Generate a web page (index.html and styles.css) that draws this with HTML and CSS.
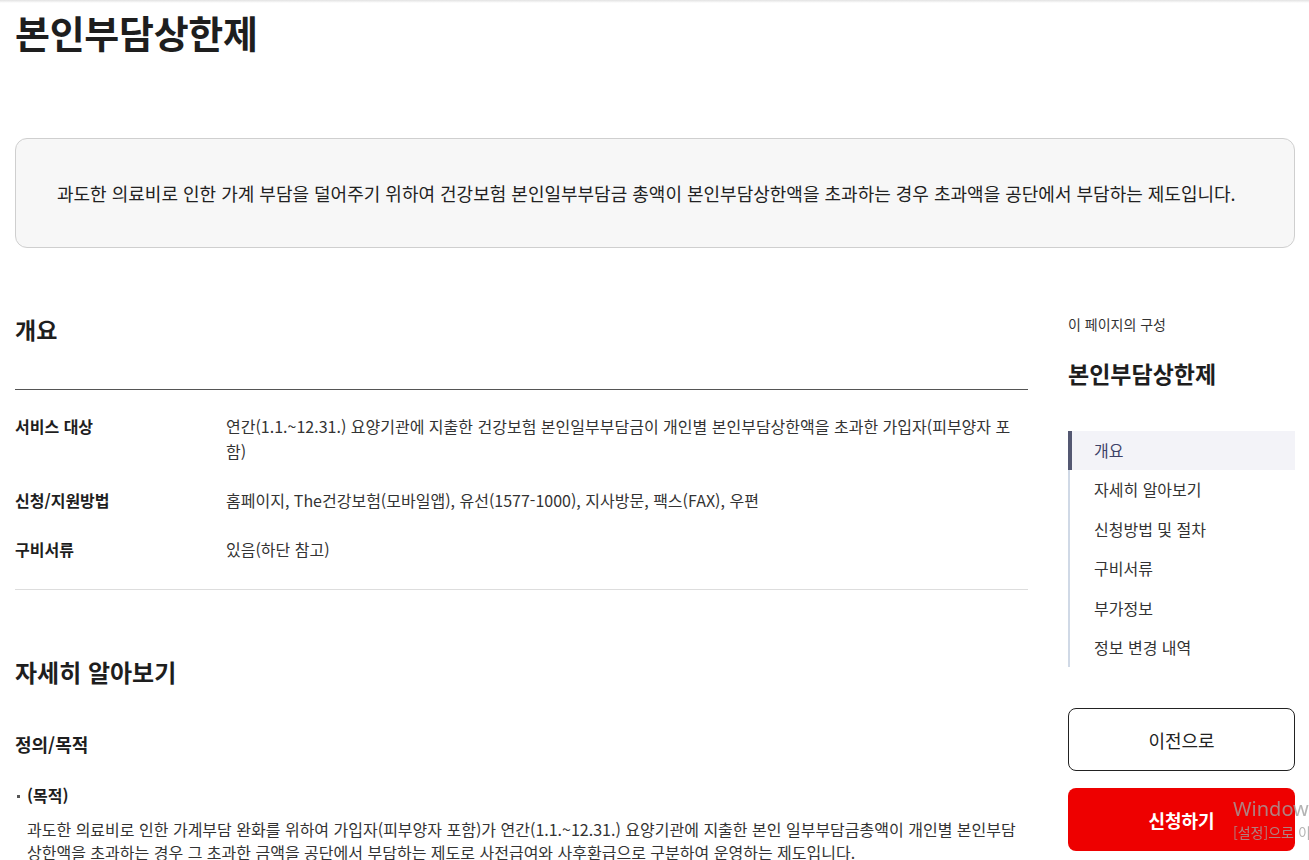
FILE: index.html
```html
<!DOCTYPE html>
<html lang="ko">
<head>
  <meta charset="UTF-8">
  <meta name="viewport" content="width=device-width, initial-scale=1.0">
  <title>본인부담상한제</title>
  <link rel="stylesheet" href="styles.css">
</head>
<body>
  <div class="topbar"></div>
  <div class="page">
    <h1 class="page-title">본인부담상한제</h1>

    <div class="summary">
      <p>과도한 의료비로 인한 가계 부담을 덜어주기 위하여 건강보험 본인일부부담금 총액이 본인부담상한액을 초과하는 경우 초과액을 공단에서 부담하는 제도입니다.</p>
    </div>

    <div class="content">
      <main class="main">
        <section class="section">
          <div class="section-head">
            <h2>개요</h2>
          </div>
          <dl class="info-list">
            <div class="info-row">
              <dt>서비스 대상</dt>
              <dd>연간(1.1.~12.31.) 요양기관에 지출한 건강보험 본인일부부담금이 개인별 본인부담상한액을 초과한 가입자(피부양자 포함)</dd>
            </div>
            <div class="info-row">
              <dt>신청/지원방법</dt>
              <dd>홈페이지, The건강보험(모바일앱), 유선(1577-1000), 지사방문, 팩스(FAX), 우편</dd>
            </div>
            <div class="info-row">
              <dt>구비서류</dt>
              <dd>있음(하단 참고)</dd>
            </div>
          </dl>
        </section>

        <section class="section detail">
          <h2>자세히 알아보기</h2>
          <h3>정의/목적</h3>
          <ul class="bullets">
            <li>
              <strong>(목적)</strong>
              <p>과도한 의료비로 인한 가계부담 완화를 위하여 가입자(피부양자 포함)가 연간(1.1.~12.31.) 요양기관에 지출한 본인 일부부담금총액이 개인별 본인부담상한액을 초과하는 경우 그 초과한 금액을 공단에서 부담하는 제도로 사전급여와 사후환급으로 구분하여 운영하는 제도입니다.</p>
            </li>
          </ul>
        </section>
      </main>

      <aside class="side">
        <div class="side-label">이 페이지의 구성</div>
        <div class="side-title">본인부담상한제</div>
        <ul class="toc">
          <li class="active">개요</li>
          <li>자세히 알아보기</li>
          <li>신청방법 및 절차</li>
          <li>구비서류</li>
          <li>부가정보</li>
          <li>정보 변경 내역</li>
        </ul>
        <button class="btn btn-line">이전으로</button>
        <button class="btn btn-red">신청하기</button>
      </aside>
    </div>
  </div>

  <div class="watermark">
    <div class="wm-big">Windows 정품 인증</div>
    <div class="wm-small">[설정]으로 이동하여 Windows를 정품 인증합니다.</div>
  </div>
</body>
</html>
```

FILE: styles.css
```css
body {
  margin: 0;
  font-family: "Noto Sans CJK KR", "Noto Sans", sans-serif;
  color: #1e1e1e;
  background-color: #fff;
}
.topbar {
  height: 3px;
  background: linear-gradient(#e2e2e2, #fff);
}
.page {
  padding: 0 14px 0 15px;
}
.page-title {
  margin: 0;
  padding-top: 6px;
  font-size: 38px;
  line-height: 46px;
  font-weight: 700;
  letter-spacing: -0.3px;
}
.summary {
  margin-top: 83px;
  height: 110px;
  box-sizing: border-box;
  padding: 0 41px;
  display: flex;
  align-items: center;
  background-color: #f7f7f7;
  border: 1px solid #cfcfcf;
  border-radius: 12px;
}
.summary p {
  margin: 0;
  font-size: 18px;
  line-height: 26px;
  color: #222;
}
.content {
  display: flex;
  gap: 40px;
  margin-top: 66px;
}
.main {
  flex: 1;
  min-width: 0;
}
.side {
  width: 227px;
  flex-shrink: 0;
}
h2 {
  margin: 0;
  font-size: 23px;
  line-height: 31px;
  font-weight: 700;
}
.section-head {
  padding-bottom: 44px;
  border-bottom: 1px solid #555;
}
.info-list {
  margin: 0;
  padding: 12px 0 15px;
  border-bottom: 1px solid #ddd;
}
.info-row {
  display: flex;
  padding: 12px 0;
  font-size: 16px;
  line-height: 25px;
}
.info-row dt {
  width: 211px;
  flex-shrink: 0;
  font-weight: 700;
}
.info-row dd {
  margin: 0;
  flex: 1;
  color: #333;
}
.detail {
  margin-top: 66px;
}
.detail h2 {
  font-size: 24px;
}
.detail h3 {
  margin: 45px 0 0;
  font-size: 18px;
  line-height: 24px;
  font-weight: 700;
}
.bullets {
  list-style: none;
  margin: 27px 0 0;
  padding: 0 0 0 12px;
}
.bullets li {
  position: relative;
  font-size: 16px;
  line-height: 24px;
}
.bullets li::before {
  content: "";
  position: absolute;
  left: -10px;
  top: 12px;
  width: 3px;
  height: 3px;
  background-color: #555;
}
.bullets p {
  margin: 11px 0 0;
  line-height: 23px;
  color: #333;
}
.side-label {
  font-size: 14px;
  line-height: 20px;
  color: #333;
}
.side-title {
  margin-top: 24px;
  font-size: 23px;
  line-height: 31px;
  font-weight: 700;
}
.toc {
  list-style: none;
  margin: 42px 0 0;
  padding: 0;
  border-left: 2px solid #d0d9e6;
}
.toc li {
  padding: 8px 0 8px 24px;
  font-size: 16px;
  line-height: 23.4px;
  color: #333;
}
.toc li.active {
  margin-left: -2px;
  padding-left: 22px;
  border-left: 4px solid #545872;
  background-color: #f3f3f8;
  color: #3d4268;
}
.btn {
  display: block;
  width: 100%;
  height: 63px;
  font-family: inherit;
  font-size: 18px;
  border-radius: 8px;
  cursor: pointer;
}
.btn-line {
  margin-top: 41px;
  background-color: #fff;
  border: 1px solid #222;
  color: #222;
}
.btn-red {
  margin-top: 17px;
  background-color: #ee0000;
  border: none;
  color: #fff;
  font-weight: 700;
}
.watermark {
  position: fixed;
  left: 1233px;
  top: 796px;
  white-space: nowrap;
  pointer-events: none;
  color: rgba(160, 160, 160, 0.8);
  font-family: "Noto Sans", sans-serif;
}
.wm-big {
  font-size: 20px;
  line-height: 26px;
}
.wm-small {
  font-family: "Noto Sans CJK KR", sans-serif;
  font-size: 14px;
  line-height: 20px;
}
```
